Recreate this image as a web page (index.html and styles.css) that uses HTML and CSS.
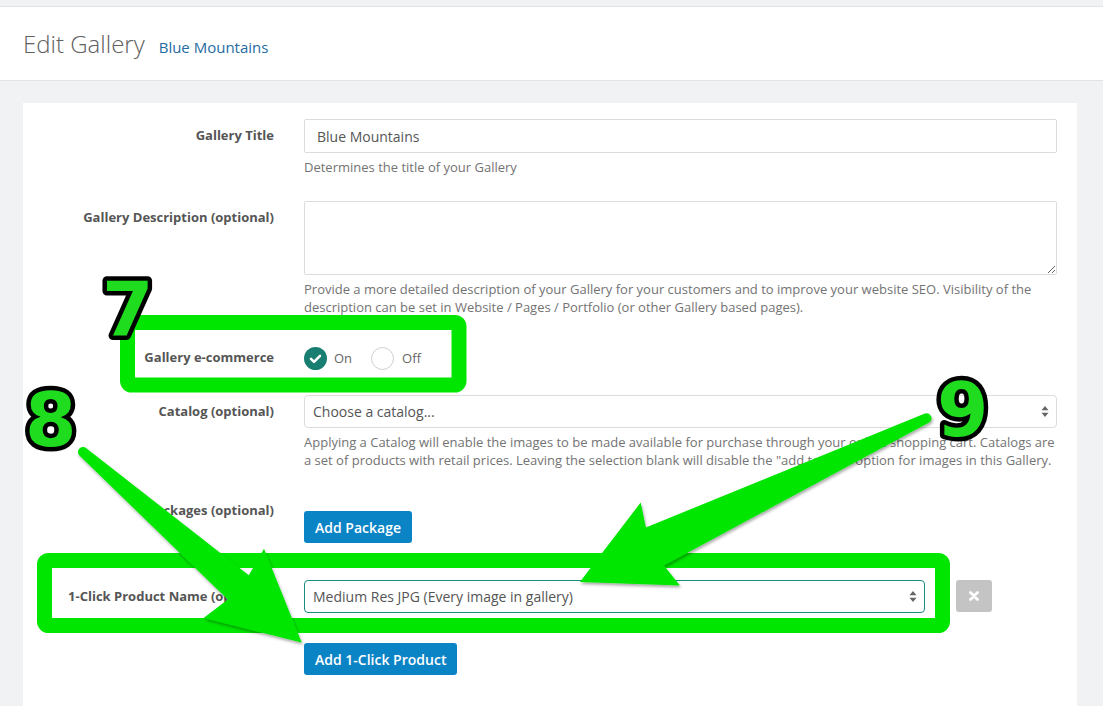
FILE: index.html
```html
<!DOCTYPE html>
<html lang="en">
<head>
    <meta charset="UTF-8">
    <meta name="viewport" content="width=device-width, initial-scale=1.0">
    <title>Edit Gallery - Blue Mountains</title>
    <link rel="stylesheet" href="styles.css">
</head>
<body>
    <div class="topbar"></div>
    <header class="page-header">
        <h1>Edit Gallery <small>Blue Mountains</small></h1>
    </header>

    <div class="content">
        <form class="panel">
            <div class="form-row">
                <label class="form-label">Gallery Title</label>
                <div class="form-field">
                    <input class="form-control" type="text" value="Blue Mountains">
                    <p class="help">Determines the title of your Gallery</p>
                </div>
            </div>

            <div class="form-row">
                <label class="form-label">Gallery Description (optional)</label>
                <div class="form-field">
                    <textarea class="form-control textarea"></textarea>
                    <p class="help">Provide a more detailed description of your Gallery for your customers and to improve your website SEO. Visibility of the description can be set in Website / Pages / Portfolio (or other Gallery based pages).</p>
                </div>
            </div>

            <div class="form-row ecommerce-row">
                <label class="form-label">Gallery e-commerce</label>
                <div class="form-field radio-group">
                    <span class="radio checked">
                        <svg width="23" height="23" viewBox="0 0 23 23"><path d="M7 11.8l3 3 6-6" fill="none" stroke="#fff" stroke-width="2.6" stroke-linecap="round" stroke-linejoin="round"/></svg>
                    </span>
                    <span class="radio-text">On</span>
                    <span class="radio"></span>
                    <span class="radio-text">Off</span>
                </div>
            </div>

            <div class="form-row">
                <label class="form-label">Catalog (optional)</label>
                <div class="form-field">
                    <div class="select-box">
                        <span>Choose a catalog...</span>
                        <svg class="caret" width="8" height="13" viewBox="0 0 8 13"><path d="M0.5 5.2L4 1l3.5 4.2z M0.5 7.8L4 12l3.5-4.2z" fill="#666"/></svg>
                    </div>
                    <p class="help">Applying a Catalog will enable the images to be made available for purchase through your online shopping cart. Catalogs are a set of products with retail prices. Leaving the selection blank will disable the "add to cart" option for images in this Gallery.</p>
                </div>
            </div>

            <div class="form-row">
                <label class="form-label">Packages (optional)</label>
                <div class="form-field">
                    <button type="button" class="btn package-btn">Add Package</button>
                </div>
            </div>

            <div class="form-row oneclick-row">
                <label class="form-label">1-Click Product Name (optional)</label>
                <div class="form-field oneclick-field">
                    <div class="select-box active">
                        <span>Medium Res JPG (Every image in gallery)</span>
                        <svg class="caret" width="8" height="13" viewBox="0 0 8 13"><path d="M0.5 5.2L4 1l3.5 4.2z M0.5 7.8L4 12l3.5-4.2z" fill="#666"/></svg>
                    </div>
                    <button type="button" class="btn-remove">
                        <svg width="10" height="10" viewBox="0 0 10 10"><path d="M1.5 1.5l7 7M8.5 1.5l-7 7" stroke="#fff" stroke-width="2.8" stroke-linecap="round"/></svg>
                    </button>
                </div>
            </div>

            <div class="form-row">
                <span></span>
                <div class="form-field">
                    <button type="button" class="btn">Add 1-Click Product</button>
                </div>
            </div>
        </form>
    </div>

    <!-- tutorial markup drawn over the page -->
    <svg class="annotations" width="1103" height="706" viewBox="0 0 1103 706">
        <defs>
            <filter id="shade" x="-10%" y="-10%" width="130%" height="130%">
                <feDropShadow dx="1" dy="2" stdDeviation="1.5" flood-color="#000" flood-opacity="0.35"/>
            </filter>
        </defs>
        <rect class="hl-box" x="127.5" y="322.5" width="331.5" height="62.5" rx="4"/>
        <rect class="hl-box" x="44.5" y="560.5" width="898" height="65" rx="4"/>
        <path class="arrow" d="M86.3,448.2 L248.8,575.2 L264,548.7 L301.7,642.5 L203.6,618.1 L227.8,599.4 L79.7,455.8 A5,5 0 0 1 86.3,448.2 Z"/>
        <path class="arrow" d="M924.9,413.5 L645.9,527.5 L640.7,502.4 L579.9,582 L679.9,585.6 L663.9,565.5 L929.1,422.5 A5,5 0 0 0 924.9,413.5 Z"/>
        <text class="num" x="102" y="335">7</text>
        <text class="num" x="25" y="446">8</text>
        <text class="num" x="937" y="436">9</text>
    </svg>
</body>
</html>
```

FILE: styles.css
```css
body {
    margin: 0;
    height: 100vh;
    overflow: hidden;
    font-family: "Open Sans", "Liberation Sans", sans-serif;
    background-color: #f1f2f4;
    color: #555;
}

.topbar {
    height: 6px;
    border-bottom: 1px solid #e2e3e5;
}

.page-header {
    height: 73px;
    background-color: #fff;
    border-bottom: 1px solid #e2e3e5;
    display: flex;
    align-items: center;
    padding-left: 23px;
}

h1 {
    margin: 0;
    font-size: 24px;
    font-weight: 300;
    color: #606060;
    display: flex;
    align-items: baseline;
    gap: 14px;
}

h1 small {
    font-size: 15px;
    font-weight: 400;
    color: #266ba2;
}

.content {
    padding: 22px 26px 0 23px;
}

.panel {
    width: 1054px;
    height: 603px;
    box-sizing: border-box;
    background-color: #fff;
    padding: 16px 20px 0 0;
}

.form-row {
    display: grid;
    grid-template-columns: 251px 753px;
    column-gap: 30px;
    margin-bottom: 15px;
}

.form-label {
    text-align: right;
    font-size: 13px;
    font-weight: 700;
    line-height: 18px;
    padding-top: 7px;
    color: #555;
    white-space: nowrap;
}

.form-control {
    display: block;
    width: 100%;
    height: 34px;
    box-sizing: border-box;
    border: 1px solid #dcdcdc;
    border-radius: 2px;
    padding: 0 12px;
    font-family: "Open Sans", "Liberation Sans", sans-serif;
    font-size: 14px;
    color: #555;
    background-color: #fff;
}

.textarea {
    height: 74px;
    padding: 6px 12px;
}

.help {
    margin: 5px 0 10px;
    font-size: 13px;
    line-height: 18px;
    color: #737373;
}

/* radios */
.ecommerce-row {
    margin-bottom: 20px;
}

.radio-group {
    display: flex;
    align-items: center;
    height: 34px;
}

.radio {
    width: 21px;
    height: 21px;
    border: 1px solid #cfcfcf;
    border-radius: 50%;
    display: flex;
    align-items: center;
    justify-content: center;
}

.radio.checked {
    width: 23px;
    height: 23px;
    border: none;
    background-color: #177e71;
}

.radio-text {
    font-size: 13px;
    color: #666;
    margin: 0 19px 0 7px;
}

.radio + .radio-text + .radio + .radio-text {
    margin-left: 8px;
}

/* selects */
.select-box {
    height: 33px;
    box-sizing: border-box;
    border: 1px solid #dcdcdc;
    border-radius: 4px;
    padding: 0 7px 0 8px;
    display: flex;
    align-items: center;
    justify-content: space-between;
    font-size: 14px;
    color: #555;
}

.select-box.active {
    border-color: #1b8b80;
}

/* buttons */
.btn {
    height: 32px;
    border: none;
    border-radius: 3px;
    padding: 0 11px;
    background-color: #0b84c6;
    color: #fff;
    font-family: "Open Sans", "Liberation Sans", sans-serif;
    font-size: 14px;
    font-weight: 600;
}

.package-btn {
    margin: 17px 0 22px;
}

.oneclick-row {
    margin-bottom: 30px;
}

.oneclick-field {
    display: flex;
    align-items: flex-start;
}

.oneclick-field .select-box {
    width: 621px;
}

.btn-remove {
    width: 36px;
    height: 32px;
    margin-left: 31px;
    border: none;
    border-radius: 3px;
    background-color: #c4c4c4;
    display: flex;
    align-items: center;
    justify-content: center;
}

/* annotation layer */
.annotations {
    position: absolute;
    top: 0;
    left: 0;
    pointer-events: none;
}

.hl-box {
    fill: none;
    stroke: #00e600;
    stroke-width: 15;
}

.arrow {
    fill: #00e600;
    filter: url(#shade);
}

.num {
    font-family: "DejaVu Sans", sans-serif;
    font-weight: bold;
    font-size: 74px;
    fill: #1fdc1f;
    stroke: #000;
    stroke-width: 9;
    stroke-linejoin: round;
    paint-order: stroke;
}
```
